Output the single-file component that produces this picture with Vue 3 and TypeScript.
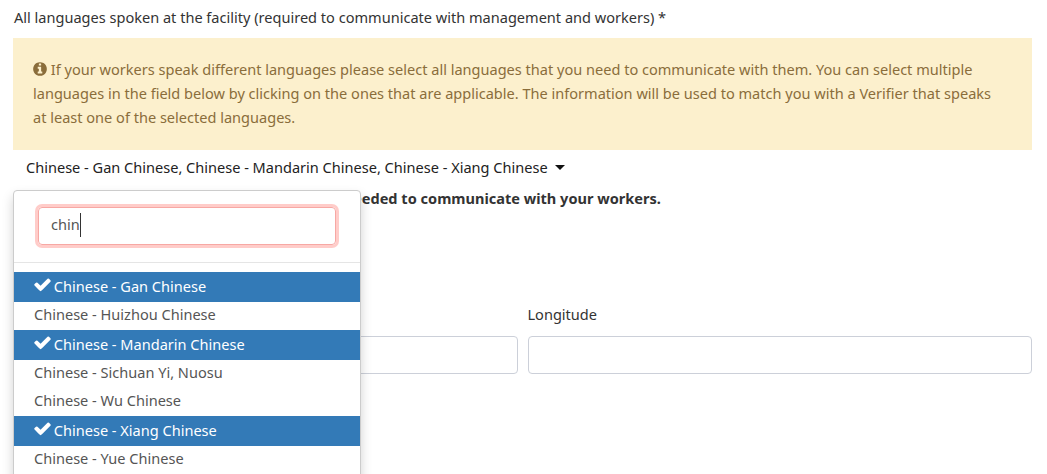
<template>
  <div class="page">
    <label class="field-label">All languages spoken at the facility (required to communicate with management and workers) *</label>

    <div class="alert">
      <svg class="info-icon" viewBox="0 0 1792 1792" fill="currentColor">
        <path d="M1152 1376v-160q0-14-9-23t-23-9h-96v-512q0-14-9-23t-23-9h-320q-14 0-23 9t-9 23v160q0 14 9 23t23 9h96v320h-96q-14 0-23 9t-9 23v160q0 14 9 23t23 9h448q14 0 23-9t9-23zm-128-896v-160q0-14-9-23t-23-9h-192q-14 0-23 9t-9 23v160q0 14 9 23t23 9h192q14 0 23-9t9-23zm640 416q0 209-103 385.5t-279.5 279.5-385.5 103-385.5-103-279.5-279.5-103-385.5 103-385.5 279.5-279.5 385.5-103 385.5 103 279.5 279.5 103 385.5z"/>
      </svg>
      If your workers speak different languages please select all languages that you need to communicate with them. You can select multiple languages in the field below by clicking on the ones that are applicable. The information will be used to match you with a Verifier that speaks at least one of the selected languages.
    </div>

    <div class="select-wrap">
      <button class="select-toggle">
        {{ selectedLabel }}
        <span class="caret"></span>
      </button>

      <div class="menu">
        <div class="search-row">
          <div class="search-box">chin<span class="text-caret"></span></div>
        </div>
        <ul class="options">
          <li
            v-for="lang in languages"
            :key="lang.name"
            class="option"
            :class="{ selected: lang.selected }"
          >
            <svg v-if="lang.selected" class="check" viewBox="0 0 1792 1792" fill="currentColor">
              <path d="M1671 566q0 40-28 68l-724 724-136 136q-28 28-68 28t-68-28l-136-136-362-362q-28-28-28-68t28-68l136-136q28-28 68-28t68 28l294 295 656-657q28-28 68-28t68 28l136 136q28 28 28 68z"/>
            </svg>
            {{ lang.name }}
          </li>
        </ul>
      </div>
    </div>

    <p class="hint">Please select at least one of the languages needed to communicate with your workers.</p>

    <div class="coords">
      <div class="coord">
        <label class="coord-label">Latitude</label>
        <input class="coord-input" type="text" />
      </div>
      <div class="coord">
        <label class="coord-label">Longitude</label>
        <input class="coord-input" type="text" />
      </div>
    </div>
  </div>
</template>

<script setup lang="ts">
import { computed } from 'vue'

interface Language {
  name: string
  selected: boolean
}

const languages: Language[] = [
  { name: 'Chinese - Gan Chinese', selected: true },
  { name: 'Chinese - Huizhou Chinese', selected: false },
  { name: 'Chinese - Mandarin Chinese', selected: true },
  { name: 'Chinese - Sichuan Yi, Nuosu', selected: false },
  { name: 'Chinese - Wu Chinese', selected: false },
  { name: 'Chinese - Xiang Chinese', selected: true },
  { name: 'Chinese - Yue Chinese', selected: false }
]

const selectedLabel = computed(() => {
  return languages.filter(l => l.selected).map(l => l.name).join(', ')
})
</script>

<style>
html,
body {
  margin: 0;
  background: #fff;
  overflow: hidden;
}
</style>

<style scoped>
.page {
  height: 474px;
  overflow: hidden;
  box-sizing: border-box;
  padding: 7px 15px 0 13px;
  font-family: 'Noto Sans', 'Open Sans', sans-serif;
  font-size: 14.55px;
  line-height: 20px;
  color: #333;
}

.field-label {
  display: block;
  margin-bottom: 11px;
  padding-left: 1px;
}

.alert {
  box-sizing: border-box;
  height: 112px;
  padding: 19px 25px 0 20px;
  background: #fcf0cd;
  color: #8a6d3b;
  line-height: 24px;
}

.info-icon {
  width: 16px;
  height: 16px;
  margin: 0 -1px 0 -1px;
  vertical-align: -2px;
}

.select-wrap {
  position: relative;
  height: 36px;
}

.select-toggle {
  display: block;
  padding: 7px 13px;
  border: none;
  background: transparent;
  font: inherit;
  color: #222;
  white-space: nowrap;
}

.caret {
  display: inline-block;
  width: 0;
  height: 0;
  margin-left: 4px;
  vertical-align: 3px;
  border-top: 5px solid #111;
  border-left: 5px solid transparent;
  border-right: 5px solid transparent;
}

.menu {
  position: absolute;
  top: 40px;
  left: 0;
  z-index: 10;
  width: 348px;
  height: 300px;
  box-sizing: border-box;
  background: #fff;
  border: 1px solid #ccc;
  border-radius: 4px;
  box-shadow: 0 6px 12px rgba(0, 0, 0, 0.175);
}

.search-row {
  padding: 16px 24px 17px;
  border-bottom: 1px solid #e5e5e5;
}

.search-box {
  box-sizing: border-box;
  height: 38px;
  padding: 5px 12px;
  border: 1px solid #f7a8a4;
  border-radius: 4px;
  box-shadow: 0 0 0 3px rgba(255, 170, 165, 0.6);
  color: #555;
}

.text-caret {
  display: inline-block;
  width: 1px;
  height: 24px;
  margin-bottom: -7px;
  background: #333;
}

.options {
  list-style: none;
  margin: 9px 0 0;
  padding: 0;
}

.option {
  height: 28px;
  padding: 0 20px;
  line-height: 25px;
  color: #555;
  white-space: nowrap;
}

.option.selected {
  height: 30px;
  line-height: 28px;
  background: #337ab7;
  color: #fff;
}

.check {
  width: 19px;
  height: 19px;
  margin-left: -1px;
  margin-right: -2px;
  vertical-align: -2px;
}

.hint {
  margin: 2px 0 0;
  padding-left: 19px;
  font-weight: 700;
  white-space: nowrap;
}

.coords {
  display: grid;
  grid-template-columns: 1fr 1fr;
  gap: 10px;
  margin-top: 96px;
}

.coord-label {
  display: block;
  margin-bottom: 12px;
}

.coord-input {
  display: block;
  box-sizing: border-box;
  width: 100%;
  height: 38px;
  border: 1px solid #ccd0d9;
  border-radius: 4px;
  background: #fff;
}
</style>
